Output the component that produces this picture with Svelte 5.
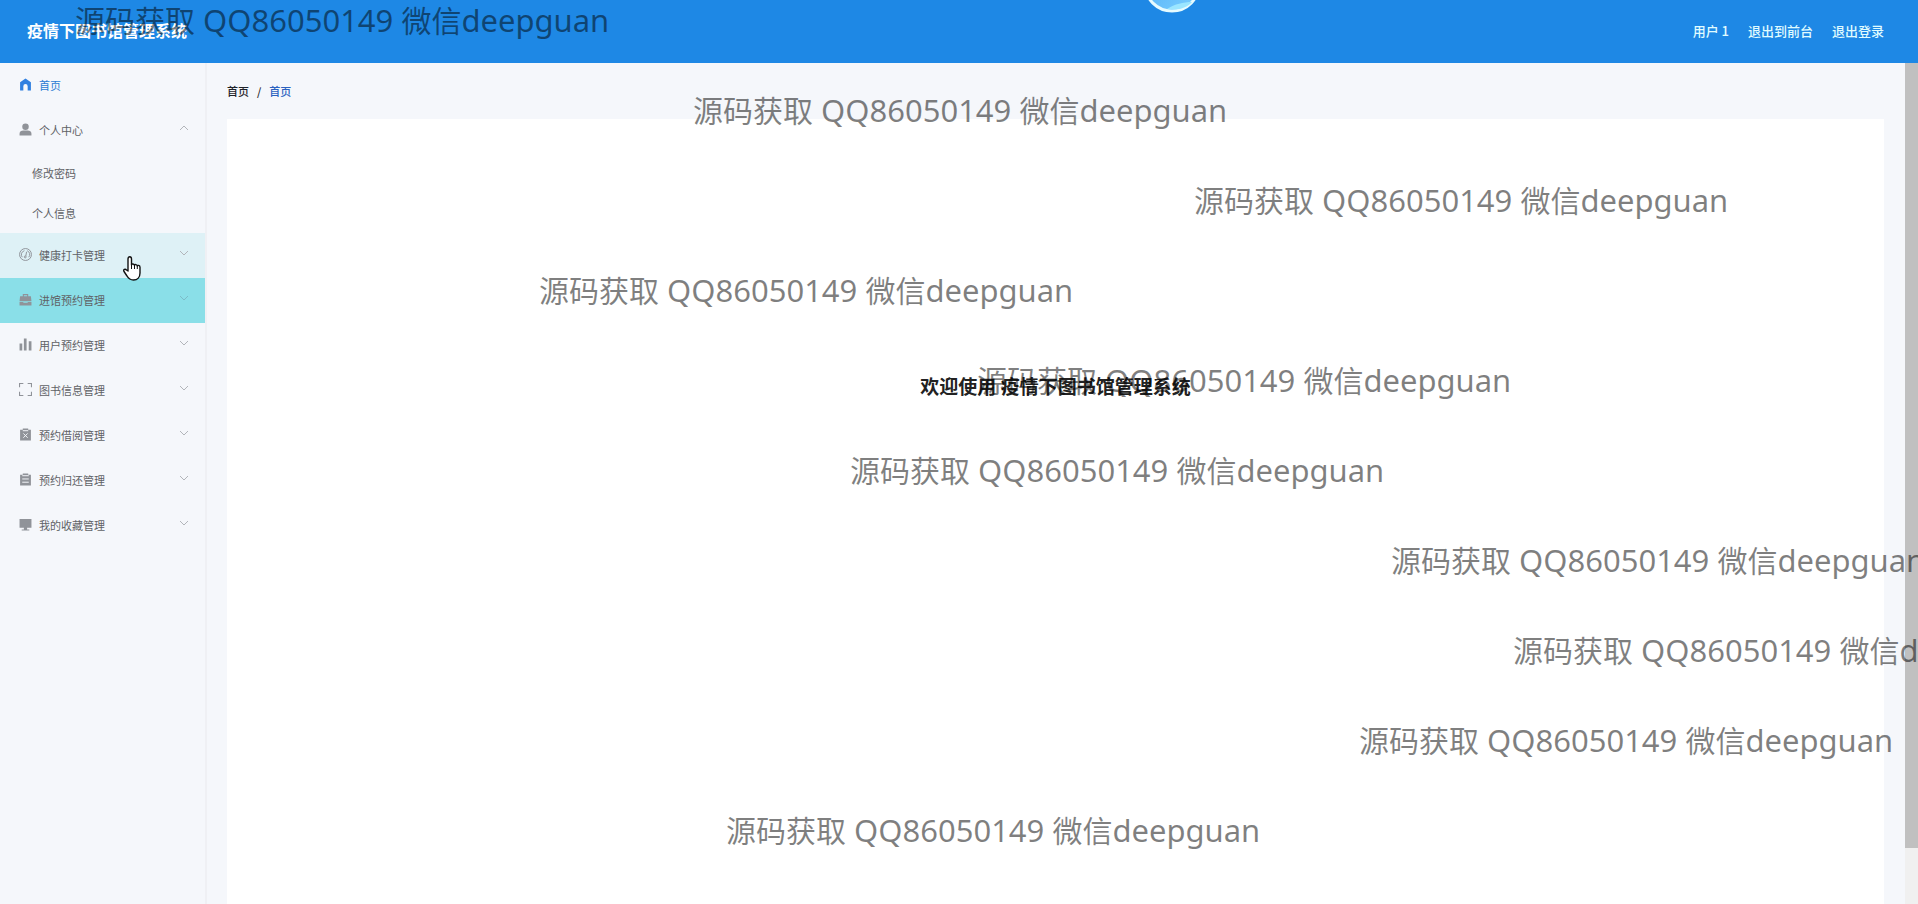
<script>
  const marks = [
    { x: 75, y: 0 }, { x: 693, y: 90 }, { x: 1194, y: 180 }, { x: 539, y: 270 },
    { x: 977, y: 360 }, { x: 850, y: 450 }, { x: 1391, y: 540 }, { x: 1513, y: 630 },
    { x: 1359, y: 720 }, { x: 726, y: 810 },
  ];
  const groups = [
    { label: '个人中心', icon: 'user', open: true, items: ['修改密码', '个人信息'] },
    { label: '健康打卡管理', icon: 'gauge', state: 'hover' },
    { label: '进馆预约管理', icon: 'case', state: 'fading' },
    { label: '用户预约管理', icon: 'bars' },
    { label: '图书信息管理', icon: 'frame' },
    { label: '预约借阅管理', icon: 'clipx' },
    { label: '预约归还管理', icon: 'clip' },
    { label: '我的收藏管理', icon: 'screen' },
  ];
</script>

{#snippet glyph(name)}
  <svg class="icon" viewBox="0 0 24 24" aria-hidden="true">
    {#if name === 'home'}
      <path fill="currentColor" d="M12 1 2 8v15h6v-8a4 4 0 0 1 8 0v8h6V8z" />
    {:else if name === 'user'}
      <circle cx="12" cy="7" r="6" fill="currentColor" />
      <path fill="currentColor" d="M1 23v-3c0-4 3-6 7-6h8c4 0 7 2 7 6v3z" />
    {:else if name === 'gauge'}
      <g fill="none" stroke="currentColor" stroke-width="1.8">
        <circle cx="12" cy="12" r="11" />
        <path d="M6 17a7.500 7.500 0 0 1 4-12M15 5a7.500 7.500 0 0 1 3 12M12.500 15l1.500-8" />
        <circle cx="11.500" cy="16.500" r="1.800" />
      </g>
    {:else if name === 'case'}
      <path fill="currentColor" d="M7 6V2h10v4h5l1 9H1l1-9zm2 0h6V4H9zM1 16.500h7v1.500h8v-1.500h7V23H1z" />
    {:else if name === 'bars'}
      <path fill="currentColor" d="M1 10h5v13H1zM9 1h5v22H9zM18 6h5v17h-5z" />
    {:else if name === 'frame'}
      <path fill="none" stroke="currentColor" stroke-width="2" d="M1 8V1h7M16 1h7v7M23 16v7h-7M8 23H1v-7" />
    {:else if name === 'clipx'}
      <path fill="currentColor" d="M2 3h5V1h10v2h5v20H2z" />
      <path fill="none" stroke="#f5f7fb" stroke-width="1.800" d="M7 5h10M8 10l8 8M16 10l-8 8" />
    {:else if name === 'clip'}
      <path fill="currentColor" d="M2 3h5V1h10v2h5v20H2z" />
      <path fill="none" stroke="#f5f7fb" stroke-width="1.800" d="M6 5h12M6 11h12M6 17h12" />
    {:else}
      <path fill="currentColor" d="M1 2h22v16h-8v3h4v2H5v-2h4v-3H1z" />
    {/if}
  </svg>
{/snippet}

<div class="page">
  <header>
    <h1>疫情下图书馆管理系统</h1>
    <nav class="account">
      <span>用户 1</span>
      <a href="#front">退出到前台</a>
      <a href="#logout">退出登录</a>
    </nav>
  </header>

  <div class="body">
    <aside>
      <a class="row active" href="#home">{@render glyph('home')}<span>首页</span></a>
      {#each groups as g}
        <button class={['row', g.state]} aria-expanded={!!g.open}>
          {@render glyph(g.icon)}
          <span>{g.label}</span>
          <svg class={['arrow', g.open && 'up']} viewBox="0 0 8 6" aria-hidden="true"><path d="M0 1l4 4 4-4" /></svg>
        </button>
        {#if g.open}
          {#each g.items as item}
            <a class="sub" href="#item">{item}</a>
          {/each}
        {/if}
      {/each}
    </aside>

    <main>
      <nav class="crumbs">
        <a href="#root">首页</a><span>/</span><a class="current" href="#home">首页</a>
      </nav>
      <section><h2>欢迎使用 疫情下图书馆管理系统</h2></section>
    </main>

    <div class="track"><div class="thumb"></div></div>
  </div>

  <div class="overlay">
    <svg class="orb" viewBox="0 0 58 58" aria-hidden="true">
      <defs>
        <linearGradient id="sky" x1="0" y1="0" x2="1" y2="1">
          <stop offset="0" stop-color="#4aa9f5" />
          <stop offset="1" stop-color="#7dd0ff" />
        </linearGradient>
      </defs>
      <circle cx="29" cy="29" r="27" fill="url(#sky)" stroke="#e6fbff" stroke-width="3" />
      <path d="M24 54c8-5 16-7 25-7-5 6-15 9-25 7z" fill="#9be6ff" />
    </svg>
    {#each marks as m}
      <p class="mark" style:left="{m.x}px" style:top="{m.y}px">源码获取<span>{' QQ86050149 '}</span>微信<span>deepguan</span></p>
    {/each}
    <svg class="pointer" viewBox="0 0 18 25" aria-hidden="true">
      <path fill="#fff" stroke="#111" stroke-width="1.4" stroke-linejoin="round" d="M5 15V3c0-3 3.500-3 3.500 0v6c0-1.500 3-1.500 3 .5 0-1.500 2.800-1.200 2.800.8 0-1.500 2.700-1.200 2.700 1V17c0 4-2.500 7-6.500 7-3.500 0-5-1.500-6.500-4L1 15.500c-1-2 1.200-3 2.500-1.500z" />
      <path fill="none" stroke="#111" d="M8.500 9v4M11.500 9.500V13M14.300 10.500V13" />
    </svg>
  </div>
</div>

<style>
  :global(body) { margin: 0; }
  .page {
    position: relative;
    display: flex;
    flex-direction: column;
    min-height: 100vh;
    overflow: hidden;
    background: #f5f7fb;
    font-family: "Noto Sans CJK SC", sans-serif;
    font-size: 11px;
    color: #606266;
  }
  a { color: inherit; text-decoration: none; }
  header {
    box-sizing: border-box;
    display: flex;
    align-items: center;
    justify-content: space-between;
    height: 63px;
    padding: 0 34px 3px 27px;
    background: #1e88e5;
    color: #fff;
  }
  h1 { margin: 0; font-size: 16px; font-weight: 700; }
  .account { display: flex; gap: 19px; font-size: 13px; color: #e0fcff; font-weight: 500; }
  .body { flex: 1; display: flex; }
  aside {
    display: flex;
    flex-direction: column;
    width: 205px;
    border-right: 2px solid #eff0f4;
    flex: none;
  }
  .row {
    box-sizing: border-box;
    display: flex;
    align-items: center;
    gap: 7px;
    height: 45px;
    padding: 0 17px 2px 19px;
    border: 0;
    background: none;
    color: #606266;
    font: inherit;
    text-align: left;
  }
  .active { color: #2b7cd3; }
  .hover { background: #def1f6; }
  .fading { background: #8adfe8; }
  .icon { width: 13px; height: 13px; color: #909399; }
  .active .icon { color: #2f7fe0; }
  .arrow {
    width: 8px;
    height: 6px;
    margin: 0 0 4px auto;
    overflow: visible;
    fill: none;
    stroke: #b2b5ba;
  }
  .fading .arrow { stroke: #7cbcc8; }
  .up { transform: rotate(180deg); }
  .sub { height: 40px; line-height: 40px; padding-left: 32px; }
  main { flex: 1; display: flex; flex-direction: column; padding: 0 21px 0 20px; }
  .crumbs {
    display: flex;
    align-items: center;
    gap: 8px;
    height: 56px;
    color: #1f2329;
    font-weight: 500;
  }
  .current { color: #2b62c0; }
  section { flex: 1; background: #fff; padding-top: 252px; text-align: center; }
  h2 { margin: 0; font-size: 19px; line-height: 30px; font-weight: 700; color: #222; }
  .track { width: 13px; background: #f0f0f0; }
  .thumb { height: 785px; background: #c0c0c0; }
  .overlay { position: absolute; inset: 0; overflow: hidden; pointer-events: none; }
  .mark {
    position: absolute;
    margin: 0;
    font-size: 30px;
    line-height: 38px;
    white-space: pre;
    color: rgba(0, 0, 0, 0.5);
  }
  .mark span { font-family: "Noto Sans", sans-serif; font-size: 31px; }
  .orb { position: absolute; left: 1143px; top: -45px; width: 58px; height: 58px; }
  .pointer { position: absolute; left: 123px; top: 256px; width: 18px; height: 25px; }
</style>
